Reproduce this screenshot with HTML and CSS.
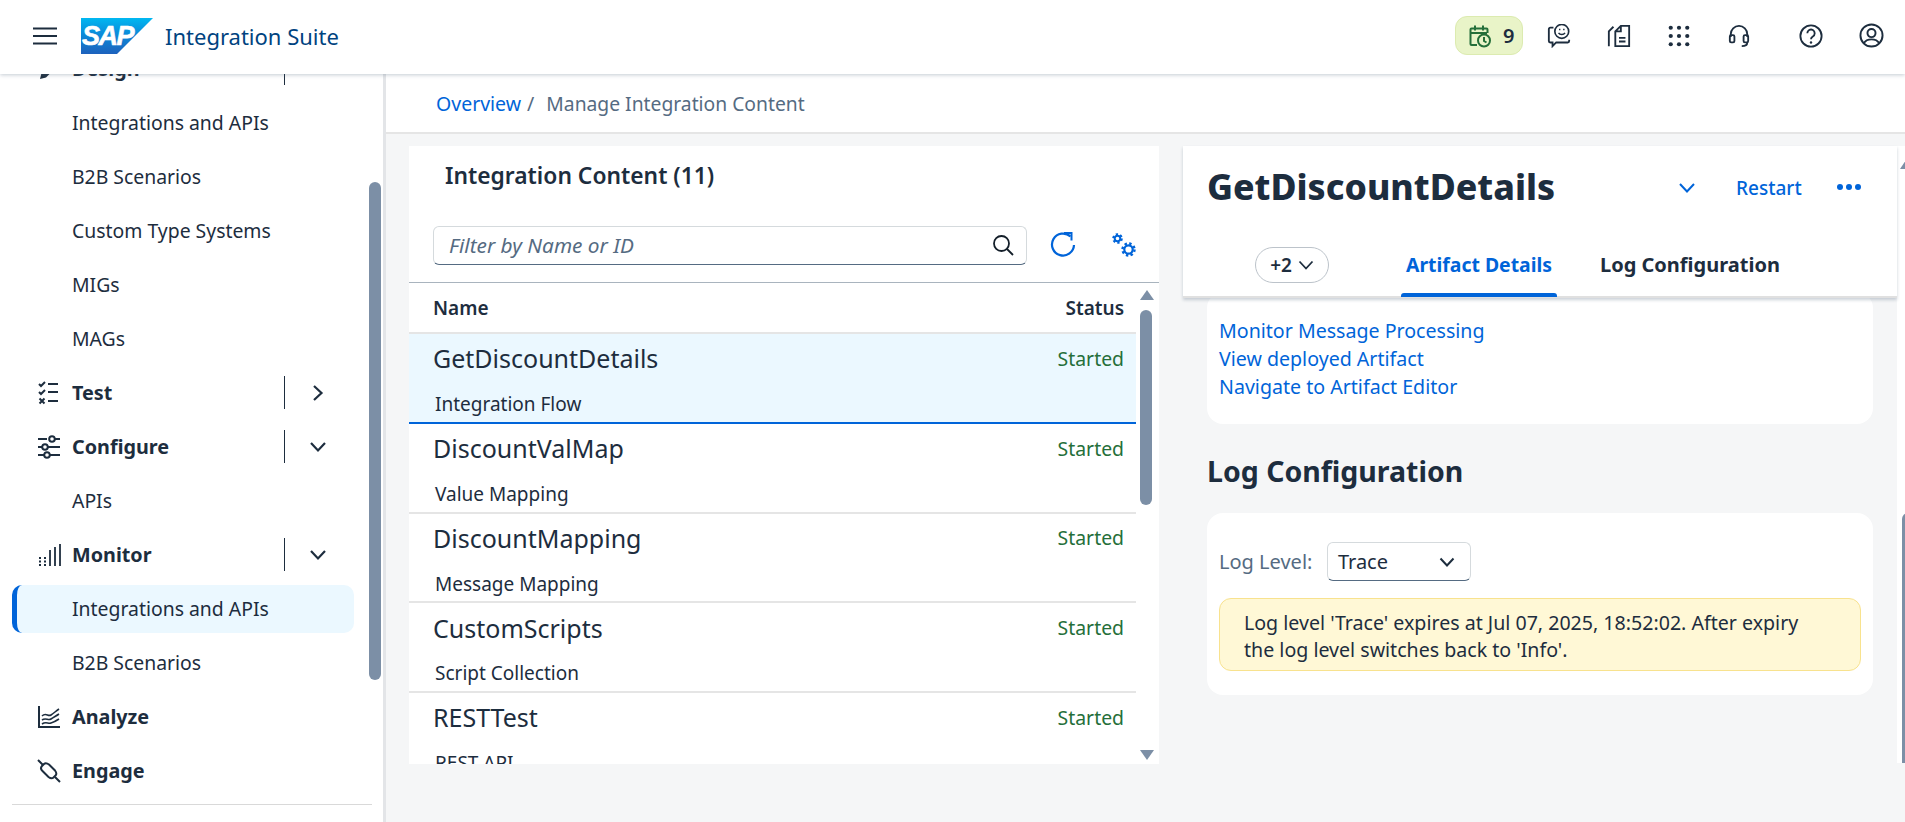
FILE: index.html
```html
<!DOCTYPE html>
<html lang="en">
<head>
<meta charset="utf-8">
<title>Integration Suite</title>
<link rel="stylesheet" href="styles.css">
</head>
<body>
<header class="shell">
  <svg class="burger" width="24" height="18" viewBox="0 0 24 18"><path d="M0 1.500h24M0 9h24M0 16.500h24" stroke="#1d2d3e" stroke-width="2"/></svg>
  <svg class="logo" width="72" height="36" viewBox="0 0 72 36">
    <defs><linearGradient id="sapg" x1="0" y1="0" x2="0" y2="1"><stop offset="0" stop-color="#00b8f1"/><stop offset="0.4" stop-color="#0a8fdc"/><stop offset="1" stop-color="#1d61bc"/></linearGradient></defs>
    <path d="M0 0h72L36 36H0z" fill="url(#sapg)"/>
    <text x="1" y="27" class="logo-text">SAP</text>
  </svg>
  <span class="product">Integration Suite</span>
  <div class="shell-actions">
    <div class="badge">
      <svg width="24" height="24" viewBox="0 0 24 24" fill="none" stroke="#256f3a" stroke-width="2"><path d="M9 21H3.500a1 1 0 0 1-1-1V5.500a1 1 0 0 1 1-1h15a1 1 0 0 1 1 1V9M2.500 9H19M7 1.500v5M15 1.500v5"/><circle cx="16" cy="16.500" r="6"/><path d="M16 13v4l2.500 1.500"/></svg>
      <b>9</b>
    </div>
    <svg class="si s1" width="24" height="24" viewBox="0 0 26 26" fill="none" stroke="#1d2d3e" stroke-width="2"><path d="M7 4H3.500A1.500 1.500 0 0 0 2 5.500v13A1.500 1.500 0 0 0 3.500 20H6v4l4-4h12.500a1.500 1.500 0 0 0 1.500-1.500V17"/><circle cx="16" cy="8" r="7.500" stroke-width="1.800"/><path d="M12.500 9.500c1.500 2.500 5.500 2.500 7 0" stroke-width="1.600"/><path d="M13 6h1.500M17.500 6H19" stroke-width="1.800"/></svg>
    <svg class="si s2" width="24" height="24" viewBox="0 0 26 26" fill="none" stroke="#1d2d3e" stroke-width="2"><path d="M9 24V8l6-6h9v22zM9 8h6V2"/><path d="M13 15h7M13 19h7"/><path d="M7 3 2 8v16"/></svg>
    <svg class="si s3" width="22" height="22" viewBox="0 0 24 24" fill="#1d2d3e"><circle cx="3" cy="3" r="2.300"/><circle cx="12" cy="3" r="2.300"/><circle cx="21" cy="3" r="2.300"/><circle cx="3" cy="12" r="2.300"/><circle cx="12" cy="12" r="2.300"/><circle cx="21" cy="12" r="2.300"/><circle cx="3" cy="21" r="2.300"/><circle cx="12" cy="21" r="2.300"/><circle cx="21" cy="21" r="2.300"/></svg>
    <svg class="si s4" width="22" height="24" viewBox="0 0 24 26" fill="none" stroke="#1d2d3e" stroke-width="2"><path d="M3 14v-3a9 9 0 0 1 18 0v3"/><rect x="2" y="12" width="5" height="8" rx="1.500"/><rect x="17" y="12" width="5" height="8" rx="1.500"/><path d="M21 20c0 3-3 4-6 4"/></svg>
    <svg class="si s5" width="24" height="24" viewBox="0 0 26 26" fill="none" stroke="#1d2d3e" stroke-width="2"><circle cx="13" cy="13" r="11.500"/><path d="M9 10a4 4 0 1 1 6 3.500c-1.300.8-2 1.500-2 3"/><circle cx="13" cy="20" r="1.300" fill="#1d2d3e" stroke="none"/></svg>
    <svg class="si s6" width="25" height="25" viewBox="0 0 26 26" fill="none" stroke="#1d2d3e" stroke-width="2"><circle cx="13" cy="13" r="11.500"/><circle cx="13" cy="10.500" r="4.200"/><path d="M5 21c2-3.500 5-4 8-4s6 .5 8 4"/></svg>
  </div>
</header>

<div class="main">
  <nav class="side">
    <div class="side-scroll">
      <div class="nav-row">
        <svg class="ni" width="24" height="24" viewBox="0 0 24 24" fill="#1d2d3e"><path d="M3 22l1.500-6L14 6.500l4.500 4.500L9 20.500z"/></svg>
        <span class="nav-h">Design</span><i class="vbar"></i>
      </div>
      <a class="nav-sub">Integrations and APIs</a>
      <a class="nav-sub">B2B Scenarios</a>
      <a class="nav-sub">Custom Type Systems</a>
      <a class="nav-sub">MIGs</a>
      <a class="nav-sub">MAGs</a>
      <div class="nav-row">
        <svg class="ni" width="24" height="24" viewBox="0 0 24 24" fill="none" stroke="#1d2d3e" stroke-width="2"><path d="M2 4l2 2 4-4M2 12l2 2 4-4M2.500 18.500l5 5M7.500 18.500l-5 5M11 4h10M11 12h10M11 21h10" transform="translate(0 -1)"/></svg>
        <span class="nav-h">Test</span><i class="vbar"></i>
        <svg class="chev chev-r" width="14" height="18" viewBox="0 0 14 18" fill="none" stroke="#1d2d3e" stroke-width="2.200"><path d="M3 2l7.500 7L3 16"/></svg>
      </div>
      <div class="nav-row">
        <svg class="ni" width="24" height="24" viewBox="0 0 24 24" fill="none" stroke="#1d2d3e" stroke-width="2"><path d="M1 4h9M18 4h5M1 12h4M11 12h12M1 20h6M13 20h10"/><circle cx="15" cy="4" r="2.800"/><circle cx="8" cy="12" r="2.800"/><circle cx="10" cy="20" r="2.800"/></svg>
        <span class="nav-h">Configure</span><i class="vbar"></i>
        <svg class="chev" width="18" height="14" viewBox="0 0 18 14" fill="none" stroke="#1d2d3e" stroke-width="2.200"><path d="M2 3l7 7.500L16 3"/></svg>
      </div>
      <a class="nav-sub">APIs</a>
      <div class="nav-row">
        <svg class="ni" width="24" height="24" viewBox="0 0 24 24" fill="none" stroke="#1d2d3e" stroke-width="2"><path d="M3 14v9M8 14v9" stroke-dasharray="2 1.500"/><path d="M13 7v16M18 4v19M23 1v22" stroke-width="1.800"/></svg>
        <span class="nav-h">Monitor</span><i class="vbar"></i>
        <svg class="chev" width="18" height="14" viewBox="0 0 18 14" fill="none" stroke="#1d2d3e" stroke-width="2.200"><path d="M2 3l7 7.500L16 3"/></svg>
      </div>
      <a class="nav-sub active">Integrations and APIs</a>
      <a class="nav-sub">B2B Scenarios</a>
      <div class="nav-row">
        <svg class="ni" width="24" height="24" viewBox="0 0 24 24" fill="none" stroke="#1d2d3e" stroke-width="2"><path d="M2 1v21h21"/><path d="M5 11c4-4 6 1 9-1s5-4 8-6M5 15c4-3 6 1 9-1s5-3 8-5M5 19c4-3 6 0 9-1s5-2 8-4" stroke-width="1.600"/></svg>
        <span class="nav-h">Analyze</span>
      </div>
      <div class="nav-row">
        <svg class="ni" width="24" height="24" viewBox="0 0 24 24" fill="none" stroke="#1d2d3e" stroke-width="2"><path d="M1 1l5 5M18 18l5 5"/><path d="M5 7l2-2c1-1 3-1 5 .5l6 6c1.500 2 1.500 4 .5 5l-2 2c-1 1-3 1-5-.5l-6-6C3.500 10 4 8 5 7z"/></svg>
        <span class="nav-h">Engage</span>
      </div>
      <hr class="side-rule">
    </div>
    <div class="side-thumb"></div>
  </nav>

  <div class="content">
    <div class="crumbs"><a>Overview</a><span class="sep">/</span><span class="cur">Manage Integration Content</span></div>
    <div class="split">
      <section class="list-panel">
        <h2>Integration Content (11)</h2>
        <div class="toolbar">
          <div class="search">
            <span class="ph">Filter by Name or ID</span>
            <svg width="22" height="22" viewBox="0 0 22 22" fill="none" stroke="#131e29" stroke-width="1.800"><circle cx="9.500" cy="9.500" r="7.500"/><path d="M15 15l6 6"/></svg>
          </div>
          <svg class="refresh" width="26" height="26" viewBox="0 0 26 26" fill="none" stroke="#0064d9" stroke-width="2.200"><path d="M20.500 4.500A11 11 0 1 0 24 13"/><path d="M14 1h7.500v7.500" stroke-width="2"/></svg>
          <svg class="gears" width="24" height="24" viewBox="0 0 24 24" fill="none" stroke="#0064d9"><circle cx="5.500" cy="5.500" r="2.800" stroke-width="2"/><circle cx="5.500" cy="5.500" r="4.300" stroke-width="2" stroke-dasharray="2.300 2.200"/><circle cx="16.500" cy="16.500" r="4.200" stroke-width="2.200"/><circle cx="16.500" cy="16.500" r="6" stroke-width="2.400" stroke-dasharray="2.400 2.310"/></svg>
        </div>
        <div class="table-wrap">
          <div class="thead"><span>Name</span><span>Status</span></div>
          <div class="row selected"><div class="r1"><span class="nm">GetDiscountDetails</span><span class="st">Started</span></div><div class="ty">Integration Flow</div></div>
          <div class="row"><div class="r1"><span class="nm">DiscountValMap</span><span class="st">Started</span></div><div class="ty">Value Mapping</div></div>
          <div class="row"><div class="r1"><span class="nm">DiscountMapping</span><span class="st">Started</span></div><div class="ty">Message Mapping</div></div>
          <div class="row"><div class="r1"><span class="nm">CustomScripts</span><span class="st">Started</span></div><div class="ty">Script Collection</div></div>
          <div class="row"><div class="r1"><span class="nm">RESTTest</span><span class="st">Started</span></div><div class="ty">REST API</div></div>
          <div class="sb-up"></div><div class="sb-thumb"></div><div class="sb-down"></div>
        </div>
      </section>

      <section class="detail">
        <div class="detail-head">
          <div class="title-row">
            <h1>GetDiscountDetails</h1>
            <svg class="tchev" width="18" height="12" viewBox="0 0 18 12" fill="none" stroke="#0064d9" stroke-width="2"><path d="M2 2l7 7.500L16 2"/></svg>
            <a class="restart">Restart</a>
            <span class="dots"><i></i><i></i><i></i></span>
          </div>
          <div class="tabs">
            <span class="more">+2 <svg width="16" height="10" viewBox="0 0 16 10" fill="none" stroke="#1d2d3e" stroke-width="1.800"><path d="M1.500 1.500 8 8.500l6.500-7"/></svg></span>
            <span class="tab on">Artifact Details</span>
            <span class="tab">Log Configuration</span>
          </div>
        </div>
        <div class="detail-body">
          <div class="card links">
            <a>Monitor Message Processing</a>
            <a>View deployed Artifact</a>
            <a>Navigate to Artifact Editor</a>
          </div>
          <h3>Log Configuration</h3>
          <div class="card log">
            <div class="lvl"><label>Log Level:</label>
              <div class="select"><span>Trace</span><svg width="16" height="10" viewBox="0 0 16 10" fill="none" stroke="#1d2d3e" stroke-width="2"><path d="M1.500 1.500 8 8.500l6.500-7"/></svg></div>
            </div>
            <div class="warn">Log level 'Trace' expires at Jul 07, 2025, 18:52:02. After expiry the log level switches back to 'Info'.</div>
          </div>
        </div>
        <div class="d-track"></div><div class="d-up"></div><div class="d-thumb"></div>
      </section>
    </div>
  </div>
</div>
</body>
</html>
```

FILE: styles.css
```css
* { box-sizing: border-box; }
html, body { margin: 0; height: 100%; overflow: hidden; }
body { font-family: "Noto Sans", "Open Sans", sans-serif; color: #1d2d3e; background: #f5f6f7; }
a { color: inherit; text-decoration: none; }

.shell { position: relative; z-index: 3; height: 74px; background: #fff; display: flex; align-items: center; box-shadow: 0 1px 4px rgba(85,107,130,.35); padding: 0 0 3px 33px; }
.burger { margin-right: 24px; }
.logo { margin-right: 12px; }
.logo-text { font: italic 700 27px "Liberation Sans", sans-serif; fill: #fff; stroke: #fff; stroke-width: .6px; letter-spacing: -1.500px; }
.product { font-size: 22px; color: #00437f; }
.shell-actions { margin-left: auto; display: flex; align-items: center; padding-right: 21px; }
.badge { width: 68px; height: 39px; background: #e9f4c8; border: 1px solid #dcebb0; border-radius: 12px; display: flex; align-items: center; padding-left: 12px; gap: 11px; font-size: 20px; }
.badge b { font-weight: 600; }
.s1 { margin-left: 24px; }
.s2 { margin-left: 36px; }
.s3 { margin-left: 37px; }
.s4 { margin-left: 38px; }
.s5 { margin-left: 49px; }
.s6 { margin-left: 36px; }

.main { display: flex; height: 748px; }
.side { position: relative; width: 386px; flex: none; background: #fff; border-right: 3px solid #e3e5e8; overflow: hidden; }
.side-scroll { position: relative; margin-top: -32px; }
.nav-row { position: relative; height: 54px; display: flex; align-items: center; padding-left: 37px; }
.nav-h { font-size: 19.800px; font-weight: 700; margin: 0 0 2px 11px; }
.ni { flex: none; }
.vbar { position: absolute; left: 284px; top: 10px; width: 1px; height: 33px; background: #1d2d3e; }
.chev { position: absolute; left: 309px; top: 50%; transform: translateY(-50%); }
.chev-r { left: 311px; }
.nav-sub { display: block; height: 54px; line-height: 54px; padding-left: 72px; font-size: 19.400px; }
.nav-sub.active { height: 48px; line-height: 48px; margin: 3px 30px 3px 12px; width: 342px; background: #ebf8ff; border-left: 5px solid #0064d9; border-radius: 10px; padding-left: 55px; }
.side-rule { border: 0; border-top: 1px solid #d9d9d9; margin: 6px 12px 0; width: 360px; }
.side-thumb { position: absolute; left: 369px; top: 108px; width: 12px; height: 498px; background: #7c8fa6; border-radius: 6px; }

.content { flex: 1; min-width: 0; }
.crumbs { height: 60px; background: #fff; border-bottom: 2px solid #e5e5e5; display: flex; align-items: center; padding-left: 50px; font-size: 19.500px; color: #556b82; }
.crumbs a { color: #0064d9; }
.sep { margin: 0 12px 0 6px; }
.cur { font-size: 19.300px; }
.split { display: flex; padding: 12px 0 0 23px; gap: 24px; }

.list-panel { position: relative; width: 750px; height: 618px; background: #fff; overflow: hidden; flex: none; }
.list-panel h2 { margin: 0; padding: 14px 0 0 36px; font-size: 22.800px; font-weight: 600; line-height: 32px; height: 64px; }
.toolbar { display: flex; align-items: center; height: 73px; padding: 0 0 2px 24px; border-bottom: 1px solid #a9b4be; }
.search { width: 594px; height: 39px; border: 1px solid #d5dadd; border-bottom: 1px solid #556b82; border-radius: 6px; display: flex; align-items: center; justify-content: space-between; padding: 0 12px 0 15px; }
.ph { font-style: italic; font-size: 20.800px; color: #556b82; }
.refresh { margin-left: 23px; }
.gears { margin: 0 0 1px 36px; }
.table-wrap { position: relative; }
.thead { display: flex; justify-content: space-between; height: 51px; align-items: center; padding: 1px 12px 0 24px; width: 727px; font-size: 19px; font-weight: 600; border-bottom: 2px solid #e5e5e5; }
.row { width: 727px; height: 89.800px; padding: 0 12px 0 24px; border-bottom: 2px solid #e5e5e5; position: relative; }
.row.selected { background: #ebf8ff; border-bottom-color: #0064d9; }
.r1 { display: flex; justify-content: space-between; align-items: center; height: 48.500px; }
.nm { font-size: 25px; }
.st { font-size: 19.400px; color: #256f3a; }
.ty { font-size: 19px; margin: 9.500px 0 0 2px; line-height: 24px; }
.sb-up, .sb-down { position: absolute; left: 731px; width: 0; height: 0; border-left: 7px solid transparent; border-right: 7px solid transparent; }
.sb-up { top: 7px; border-bottom: 10px solid #7c8fa6; }
.sb-down { top: 467px; border-top: 10px solid #7c8fa6; }
.sb-thumb { position: absolute; left: 731px; top: 27px; width: 12px; height: 195px; background: #7c8fa6; border-radius: 6px; }

.detail { position: relative; flex: 1; min-width: 0; height: 676px; }
.detail-head { position: relative; z-index: 1; width: 714px; height: 152px; background: #fff; box-shadow: 0 2px 3px rgba(85,107,130,.3); border-bottom: 2px solid #e0e0e0; }
.title-row { display: flex; align-items: center; height: 80px; padding-left: 24px; }
h1 { margin: 0; font-size: 35.600px; font-weight: 800; line-height: 46px; }
.tchev { margin: 4px 0 0 123px; }
.restart { font-size: 19px; color: #0064d9; margin: 4px 0 0 40px; font-weight: 500; }
.dots { display: flex; gap: 3px; margin: 2px 0 0 35px; }
.dots i { width: 6px; height: 6px; border-radius: 50%; background: #0064d9; }
.tabs { display: flex; align-items: center; height: 72px; padding: 6px 0 0 72px; font-size: 20px; font-weight: 700; }
.more { width: 74px; height: 36px; border: 1px solid #bcc3ca; border-radius: 18px; display: flex; align-items: center; justify-content: center; gap: 6px; font-size: 19px; font-weight: 600; margin-right: 77px; }
.tab { margin-right: 48px; line-height: 36px; position: relative; }
.tab.on { color: #0064d9; font-size: 19.400px; }
.tab.on::after { content: ""; position: absolute; left: -5px; right: -5px; bottom: -14px; height: 4px; background: #0064d9; border-radius: 3px 3px 0 0; }
.detail-body { padding: 0 24px; width: 714px; }
.card { background: #fff; border-radius: 16px; width: 666px; }
.links { margin-top: -6px; padding: 25px 12px 24px; height: 132px; font-size: 19.600px; line-height: 28px; }
.links a { display: block; color: #0064d9; }
h3 { font-size: 28.500px; font-weight: 700; margin: 30px 0 25px; line-height: 34px; }
.log { height: 182px; padding: 29px 12px 0; }
.lvl { display: flex; align-items: center; gap: 14.500px; font-size: 20px; }
.lvl label { color: #556b82; }
.select { width: 144px; height: 39px; border: 1px solid #d5dadd; border-bottom: 1px solid #556b82; border-radius: 6px; display: flex; align-items: center; justify-content: space-between; padding: 0 15px 0 10px; }
.warn { margin-top: 17px; height: 73px; background: #fff8d6; border: 1px solid #f8e28e; border-radius: 12px; padding: 10px 50px 8px 24px; font-size: 19.600px; line-height: 27px; }
.d-track { position: absolute; left: 714px; top: 0; width: 12px; height: 617px; background: #fff; }
.d-up { position: absolute; left: 717px; top: 14px; width: 0; height: 0; border-left: 6px solid transparent; border-right: 6px solid transparent; border-bottom: 9px solid #7c8fa6; }
.d-thumb { position: absolute; left: 719px; top: 367px; width: 12px; height: 250px; background: #7c8fa6; border-radius: 6px 0 0 0; }
```
